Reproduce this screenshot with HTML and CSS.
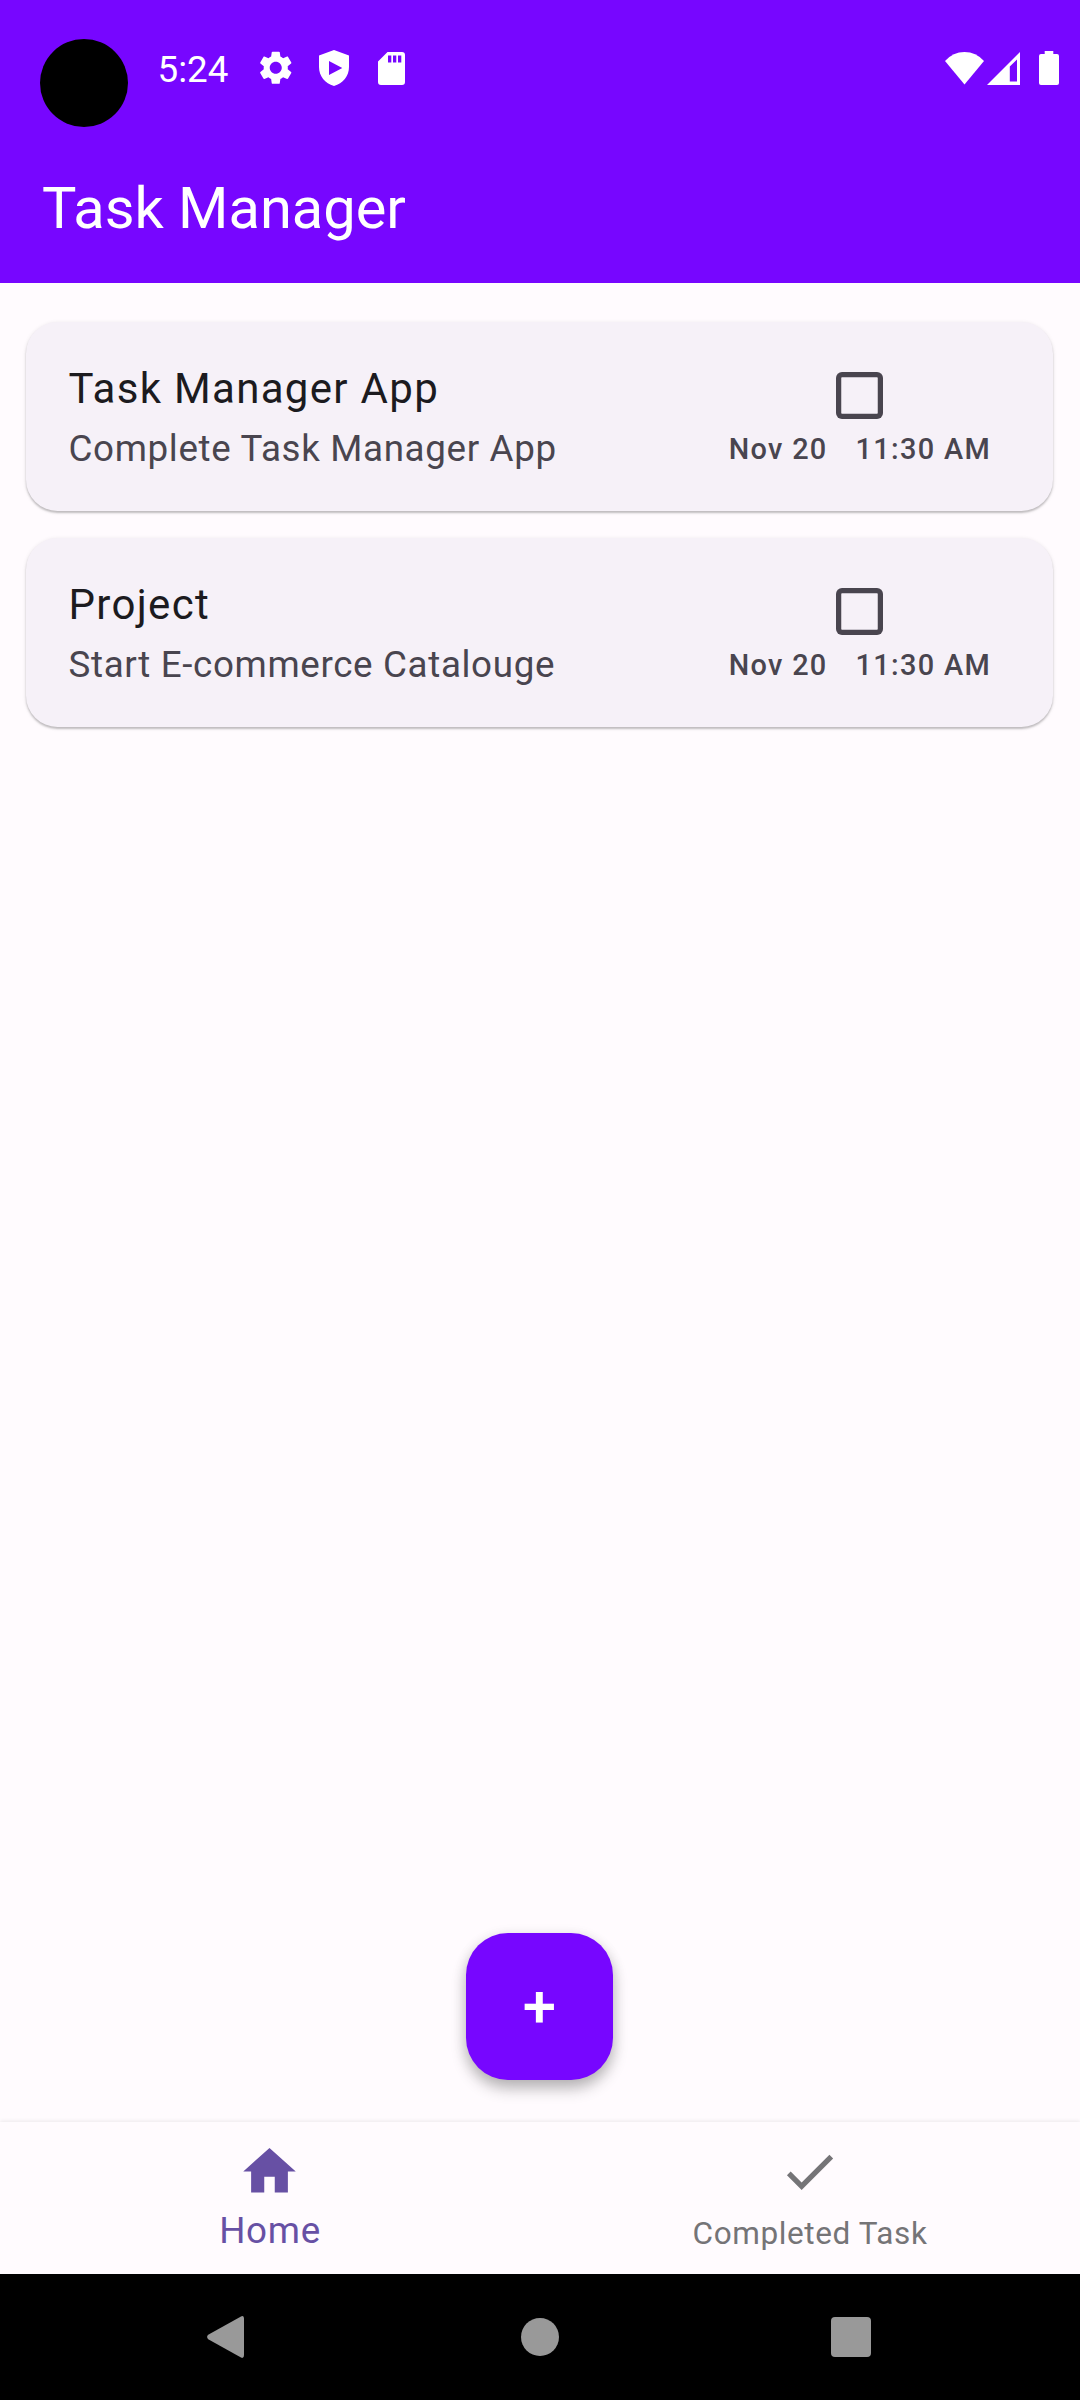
FILE: index.html
```html
<!DOCTYPE html>
<html lang="en">
<head>
<meta charset="utf-8">
<title>Task Manager</title>
<link rel="stylesheet" href="styles.css">
</head>
<body>
<div class="screen">
  <header class="top">
    <div class="status">
      <span class="cutout"></span>
      <span class="clock">5:24</span>
      <svg class="gear" viewBox="2 2 20 20"><path d="M19.14 12.94c.04-.3.06-.61.06-.94 0-.32-.02-.64-.07-.94l2.03-1.58c.18-.14.23-.41.12-.61l-1.92-3.32c-.12-.22-.37-.29-.59-.22l-2.39.96c-.5-.38-1.03-.7-1.62-.94l-.36-2.54c-.04-.24-.24-.41-.48-.41h-3.84c-.24 0-.43.17-.47.41l-.36 2.54c-.59.24-1.13.57-1.62.94l-2.39-.96c-.22-.08-.47 0-.59.22L2.74 8.87c-.12.21-.08.47.12.61l2.03 1.58c-.05.3-.09.63-.09.94s.02.64.07.94l-2.03 1.58c-.18.14-.23.41-.12.61l1.92 3.32c.12.22.37.29.59.22l2.39-.96c.5.38 1.03.7 1.62.94l.36 2.54c.05.24.24.41.48.41h3.84c.24 0 .44-.17.47-.41l.36-2.54c.59-.24 1.13-.56 1.62-.94l2.39.96c.22.08.47 0 .59-.22l1.92-3.32c.12-.22.07-.47-.12-.61l-2.01-1.58zM12 15.6c-1.98 0-3.6-1.62-3.6-3.6s1.62-3.6 3.6-3.6 3.6 1.62 3.6 3.6-1.62 3.6-3.6 3.6z"/></svg>
      <svg class="shield" viewBox="0 0 30 36"><path fill-rule="evenodd" d="M15 0 30 5.500V17C30 26 24 33.500 15 36 6 33.500 0 26 0 17V5.500ZM10 11V25L23.300 18Z"/></svg>
      <svg class="sd" viewBox="0 0 27 33"><path fill-rule="evenodd" d="M9.500 0H24Q27 0 27 3V30Q27 33 24 33H3Q0 33 0 30V9.500ZM10 3.500V10.500H13.300V3.500ZM15 3.500V10.500H18.300V3.500ZM20 3.500V10.500H23.300V3.500Z"/></svg>
      <span class="spacer"></span>
      <svg class="wifi" viewBox="0 0 39 33"><path d="M19.500 32.500 0 9Q8 0 19.500 0T39 9Z"/></svg>
      <svg class="signal" viewBox="0 0 33 33"><path fill-rule="evenodd" d="M33 0V33H0ZM30 7.500 22.800 14.500V29.500H30Z"/></svg>
      <svg class="battery" viewBox="0 0 20 34"><path d="M5.700 0H14.300V3H18Q20 3 20 5V32Q20 34 18 34H2Q0 34 0 32V5Q0 3 2 3H5.700Z"/></svg>
    </div>
    <h1 class="title">Task Manager</h1>
  </header>

  <main class="list">
    <article class="card">
      <div class="info">
        <h2 class="name">Task Manager App</h2>
        <p class="detail">Complete Task Manager App</p>
      </div>
      <div class="meta">
        <span class="checkbox"></span>
        <div class="when"><span>Nov 20</span><span>11:30 AM</span></div>
      </div>
    </article>
    <article class="card">
      <div class="info">
        <h2 class="name">Project</h2>
        <p class="detail">Start E-commerce Catalouge</p>
      </div>
      <div class="meta">
        <span class="checkbox"></span>
        <div class="when"><span>Nov 20</span><span>11:30 AM</span></div>
      </div>
    </article>
  </main>

  <button class="fab">+</button>

  <nav class="tabs">
    <a class="tab active">
      <svg class="tab-icon" viewBox="0 0 24 24"><path d="M10 20v-6h4v6h5v-8h3L12 3 2 12h3v8z"/></svg>
      <span class="tab-label">Home</span>
    </a>
    <a class="tab">
      <svg class="tab-icon" viewBox="0 0 24 24"><path d="M9 16.170 4.830 12l-1.420 1.410L9 19 21 7l-1.410-1.410z"/></svg>
      <span class="tab-label">Completed Task</span>
    </a>
  </nav>

  <footer class="system">
    <svg class="back" viewBox="0 0 37 42"><path d="M34 0.400Q37-.8 37 3V39Q37 42.800 34 41.600L1.200 23.200Q-1 21 1.200 18.800Z"/></svg>
    <span class="home-dot"></span>
    <span class="recents"></span>
  </footer>
</div>
</body>
</html>
```

FILE: styles.css
```css
* { box-sizing: border-box; margin: 0; padding: 0; }
body { font-family: Roboto, sans-serif; font-weight: 400; }
svg { display: block; fill: currentColor; flex: none; }
.screen {
  width: 1080px; height: 2400px;
  display: flex; flex-direction: column;
  background: #fffbfe; overflow: hidden;
}

.top { height: 283px; flex: none; background: #7706ff; color: #fff; }
.status {
  height: 136px; padding: 0 21px 0 40px;
  display: flex; align-items: center;
}
.cutout { width: 88px; height: 88px; margin-top: 30px; border-radius: 50%; background: #000; }
.clock { width: 102.500px; margin-left: 29.500px; padding-top: 3px; font-size: 36.75px; line-height: 44px; }
.gear { width: 33.500px; height: 33.500px; margin-left: -1px; }
.shield { width: 30px; height: 36px; margin-left: 26.500px; }
.sd { width: 27px; height: 33px; margin-left: 29px; }
.spacer { flex: 1; }
.wifi { width: 39px; height: 33px; }
.signal { width: 33px; height: 33px; margin-left: 3px; }
.battery { width: 20px; height: 34px; margin-left: 19px; }
.title {
  height: 147px; padding-left: 42px;
  font-size: 57.750px; font-weight: 400; line-height: 144px;
}

.list {
  flex: 1; padding: 39px 27px 0 26px;
  display: flex; flex-direction: column; gap: 27px;
}
.card {
  height: 189px; padding: 43px 62px 0 42.500px; border-radius: 31.500px;
  display: flex; justify-content: space-between;
  background: #f6f1f8;
  box-shadow: 0 2px 2px rgba(0,0,0,.2), 0 1px 4px rgba(0,0,0,.1);
}
.name { font-size: 42px; font-weight: 400; line-height: 48px; letter-spacing: 1.310px; color: #1c1b1f; }
.detail { margin-top: 14px; font-size: 36.750px; line-height: 44px; letter-spacing: .650px; color: #49454f; }
.meta { display: flex; flex-direction: column; align-items: center; color: #49454f; }
.checkbox {
  width: 47.250px; height: 47.250px; margin-top: 7px; margin-right: 1px;
  border-radius: 6px; box-shadow: inset 0 0 0 5.250px #49454f;
}
.when {
  display: flex; gap: 28px; margin-top: 12.750px;
  font-size: 28.900px; font-weight: 500; line-height: 34px; letter-spacing: 1.310px;
}

.fab {
  width: 147px; height: 147px; flex: none; align-self: center; margin: 0 1px 42px 0;
  border: 0; border-radius: 42px; background: #7706ff; color: #fff;
  font: 500 60px/147px Roboto, sans-serif;
  box-shadow: 0 9px 15px rgba(0,0,0,.24), 0 3px 14px rgba(0,0,0,.1);
}

.tabs {
  height: 152px; flex: none; display: flex;
  background: #fffbfe; box-shadow: 0 -1px 4px rgba(0,0,0,.08);
}
.tab {
  flex: 1; padding-top: 18px;
  display: flex; flex-direction: column; align-items: center;
  color: #757477;
}
.tab-icon { width: 63px; height: 63px; margin-right: 1px; }
.tab-label { margin-top: 9px; font-size: 31.500px; line-height: 44px; letter-spacing: .600px; }
.active { color: #6750a4; }
.active .tab-label { margin-top: 6px; font-size: 36.750px; letter-spacing: .700px; }

.system {
  height: 126px; flex: none; padding: 0 209px 0 207px;
  display: grid; grid-template-columns: 37px 1fr 40px; align-items: center;
  background: #000; color: #999;
}
.back { width: 37px; height: 42px; }
.home-dot { width: 38px; height: 38px; margin-left: 277px; border-radius: 50%; background: #999; }
.recents { width: 40px; height: 40px; border-radius: 4px; background: #999; }
```
